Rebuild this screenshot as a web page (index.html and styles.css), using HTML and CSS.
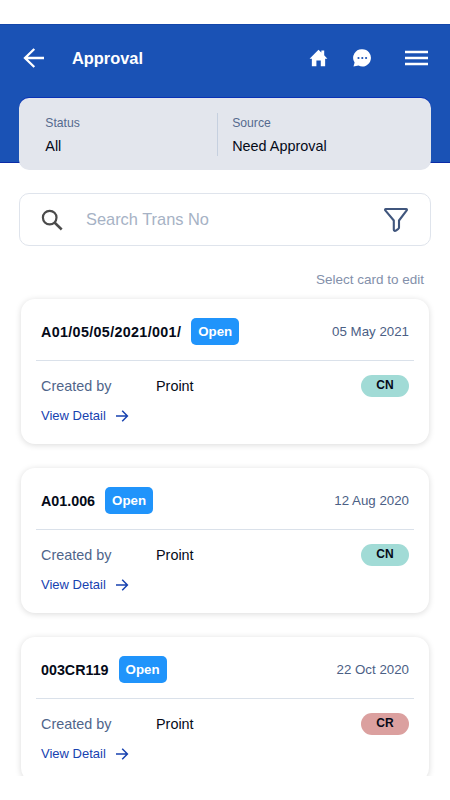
FILE: index.html
```html
<!DOCTYPE html>
<html lang="en">
<head>
<meta charset="utf-8">
<title>Approval</title>
<link rel="stylesheet" href="styles.css">
</head>
<body>
<svg class="symbols" aria-hidden="true">
  <symbol id="arrow" viewBox="0 0 14 12"><path d="M1 6h11.3M7.2 .8 12.4 6l-5.2 5.2" fill="none" stroke="currentColor" stroke-width="1.5"/></symbol>
</svg>
<div class="app">
  <header class="header">
    <nav class="bar">
      <svg class="back" viewBox="0 0 22 20"><path d="M21 10H2M11.3 1 2 10l9.3 9" fill="none" stroke="#fff" stroke-width="2.3"/></svg>
      <h1 class="title">Approval</h1>
      <svg class="home" viewBox="0 0 20 18"><path d="M10 .3 13 3.2V1h3v5.2l3.4 3.6H17V17.6h-4.6v-6H7.8v6H3V9.8H.6L10 .3Z" fill="#fff"/></svg>
      <svg class="chat" viewBox="0 0 18 18"><path d="M9.3.3a8.6 8.6 0 1 1-3.8 16.3L.5 17.5l1.1-3.9A8.6 8.6 0 0 1 9.3.3Z" fill="#fff"/><g fill="#1a52b5"><circle cx="5.5" cy="9" r="1.1"/><circle cx="9.3" cy="9" r="1.1"/><circle cx="13.1" cy="9" r="1.1"/></g></svg>
      <svg class="menu" viewBox="0 0 23 16"><path d="M0 2h23M0 8h23M0 14h23" stroke="#fff" stroke-width="2.4"/></svg>
    </nav>
    <section class="summary">
      <div class="field"><span class="label">Status</span><span class="value">All</span></div>
      <div class="field field-source"><span class="label">Source</span><span class="value">Need Approval</span></div>
    </section>
  </header>
  <main class="content">
    <div class="search">
      <svg class="glass" viewBox="0 0 22 22"><circle cx="8.7" cy="8.6" r="6.8" fill="none" stroke="#4b4b4b" stroke-width="2.2"/><path d="m13.5 13.5 7.2 7" stroke="#4b4b4b" stroke-width="2.5"/></svg>
      <span class="placeholder">Search Trans No</span>
      <svg class="funnel" viewBox="0 0 26 26"><path d="M2.8 2h20.4c.8 0 1 .8.5 1.4L16 13.5v6.9c0 .6-.2 1-.7 1.4l-2.4 1.8c-.9.5-2.1.1-2.1-.8v-9.3L2.3 3.4C1.8 2.8 2 2 2.8 2Z" fill="none" stroke="#40567d" stroke-width="2.1" stroke-linejoin="round"/></svg>
    </div>
    <p class="hint">Select card to edit</p>
    <article class="card">
      <div class="top"><strong class="number wide">A01/05/05/2021/001/</strong><span class="state">Open</span><time class="date">05 May 2021</time></div>
      <div class="row"><span class="by">Created by</span><span class="name">Proint</span><span class="tag cn">CN</span></div>
      <a class="detail">View Detail<svg class="go"><use href="#arrow"/></svg></a>
    </article>
    <article class="card">
      <div class="top"><strong class="number">A01.006</strong><span class="state">Open</span><time class="date">12 Aug 2020</time></div>
      <div class="row"><span class="by">Created by</span><span class="name">Proint</span><span class="tag cn">CN</span></div>
      <a class="detail">View Detail<svg class="go"><use href="#arrow"/></svg></a>
    </article>
    <article class="card">
      <div class="top"><strong class="number">003CR119</strong><span class="state">Open</span><time class="date">22 Oct 2020</time></div>
      <div class="row"><span class="by">Created by</span><span class="name">Proint</span><span class="tag cr">CR</span></div>
      <a class="detail">View Detail<svg class="go"><use href="#arrow"/></svg></a>
    </article>
  </main>
</div>
</body>
</html>
```
FILE: styles.css
```css
* { box-sizing: border-box; }
body { margin: 0; background: #fff; font-family: "Liberation Sans", Arial, sans-serif; color: #050a18; }
svg { display: block; flex: none; }
.symbols { display: none; }
.app { height: 776px; padding-top: 24px; overflow: hidden; background: #fff; }
.header { height: 139px; background: #1a52b5; border-top: 1px solid #1447aa; border-bottom: 1px solid #0a2ba6; }
.bar { display: flex; align-items: center; height: 66px; padding: 0 22px 0 22.5px; }
.back { width: 22px; height: 20px; }
.title { flex: 1; margin: 0 0 0 27.5px; font-size: 16.4px; line-height: 20px; color: #fff; }
.home { width: 19px; height: 18px; }
.chat { width: 18px; height: 18px; margin-left: 25px; }
.menu { width: 23px; height: 16px; margin-left: 34px; }
.summary { display: flex; height: 72px; margin: 7px 19px 0; padding: 15px 0; border-radius: 10px; background: #e3e6ed; box-shadow: 0 -1px #0b32b5; }
.field { display: flex; flex-direction: column; width: 198px; padding-left: 26.3px; }
.field-source { height: 43px; padding-left: 14.2px; border-left: 1px solid #c6d0df; }
.label { margin-top: 2px; font-size: 12.2px; line-height: 16px; color: #556a8e; }
.value { margin-top: 6px; font-size: 14.4px; line-height: 18px; }
.content { padding: 30px 21px 0; }
.search { display: flex; align-items: center; height: 53px; margin: 0 -2px; padding: 0 21px; border: 1px solid #dfe4ec; border-radius: 10px; background: #fff; }
.glass { width: 22px; height: 22px; }
.placeholder { flex: 1; margin-left: 23px; font-size: 16.4px; color: #a6b2c5; }
.funnel { width: 26px; height: 26px; }
.hint { margin: 26px 5px 11px; text-align: right; font-size: 13.5px; line-height: 16px; color: #8390aa; }
.card { height: 145px; margin-bottom: 24px; padding: 0 15px; border-radius: 14px; background: #fff; box-shadow: 0 1px 6px rgba(0, 0, 0, .15); }
.top { display: flex; align-items: center; height: 62px; padding: 4px 5px 0; border-bottom: 1px solid #dae1ea; }
.number { font-size: 14.3px; }
.wide { letter-spacing: .35px; }
.state { width: 48px; height: 27px; margin-left: 10px; border-radius: 5px; background: #2094fb; color: #fff; text-align: center; font-size: 13.3px; line-height: 27px; font-weight: bold; }
.date { margin-left: auto; font-size: 13.3px; color: #4b6085; }
.row { display: flex; align-items: center; height: 22px; margin-top: 14px; padding: 0 5px; font-size: 14.4px; }
.by { width: 115px; color: #50658a; }
.tag { width: 48px; height: 22px; margin-left: auto; border-radius: 11px; text-align: center; font-size: 12px; line-height: 21px; font-weight: bold; }
.cn { background: #a1dbd6; }
.cr { background: #dba09f; }
.detail { display: flex; align-items: center; height: 18px; margin: 9px 0 0 5px; font-size: 13px; color: #1742b0; }
.go { width: 14px; height: 12px; margin: 2px 0 0 9px; }
```
